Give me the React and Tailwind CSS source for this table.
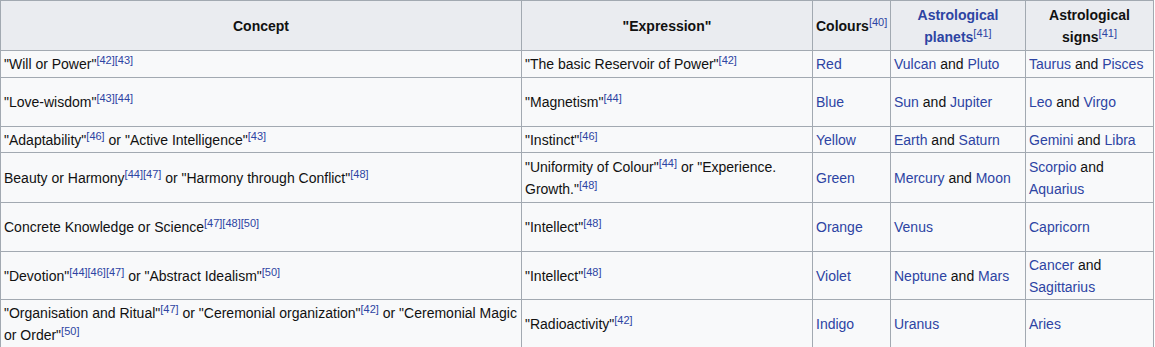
import React from "react";

const L = ({ children }) => <span className="text-[#2d44a3]">{children}</span>;
const S = ({ children }) => (
  <span className="align-[5px] text-[11px] font-normal leading-none text-[#2d44a3]">{children}</span>
);

const td = "border border-[#a2a9b1] px-[3px] py-0 align-middle";
const th = "border border-[#a2a9b1] px-[3px] py-0 align-middle text-center font-bold bg-[#eaecf0]";

const rows = [
  {
    h: "h-[27px]",
    c: [
      <>"Will or Power"<S>[42][43]</S></>,
      <>"The basic Reservoir of Power"<S>[42]</S></>,
      <L>Red</L>,
      <><L>Vulcan</L> and <L>Pluto</L></>,
      <><L>Taurus</L> and <L>Pisces</L></>,
    ],
  },
  {
    h: "h-[49px]",
    c: [
      <>"Love-wisdom"<S>[43][44]</S></>,
      <>"Magnetism"<S>[44]</S></>,
      <L>Blue</L>,
      <><L>Sun</L> and <L>Jupiter</L></>,
      <><L>Leo</L> and <L>Virgo</L></>,
    ],
  },
  {
    h: "h-[26px]",
    c: [
      <>"Adaptability"<S>[46]</S> or "Active Intelligence"<S>[43]</S></>,
      <>"Instinct"<S>[46]</S></>,
      <L>Yellow</L>,
      <><L>Earth</L> and <L>Saturn</L></>,
      <><L>Gemini</L> and <L>Libra</L></>,
    ],
  },
  {
    h: "h-[50px]",
    c: [
      <>Beauty or Harmony<S>[44][47]</S> or "Harmony through Conflict"<S>[48]</S></>,
      <>"Uniformity of Colour"<S>[44]</S> or "Experience. Growth."<S>[48]</S></>,
      <L>Green</L>,
      <><L>Mercury</L> and <L>Moon</L></>,
      <><L>Scorpio</L> and <L>Aquarius</L></>,
    ],
  },
  {
    h: "h-[49px]",
    c: [
      <>Concrete Knowledge or Science<S>[47][48][50]</S></>,
      <>"Intellect"<S>[48]</S></>,
      <L>Orange</L>,
      <L>Venus</L>,
      <L>Capricorn</L>,
    ],
  },
  {
    h: "h-[48px]",
    c: [
      <>"Devotion"<S>[44][46][47]</S> or "Abstract Idealism"<S>[50]</S></>,
      <>"Intellect"<S>[48]</S></>,
      <L>Violet</L>,
      <><L>Neptune</L> and <L>Mars</L></>,
      <><L>Cancer</L> and <L>Sagittarius</L></>,
    ],
  },
  {
    h: "h-[49px]",
    c: [
      <>"Organisation and Ritual"<S>[47]</S> or "Ceremonial organization"<S>[42]</S> or "Ceremonial Magic or Order"<S>[50]</S></>,
      <>"Radioactivity"<S>[42]</S></>,
      <L>Indigo</L>,
      <L>Uranus</L>,
      <L>Aries</L>,
    ],
  },
];

export default function App() {
  return (
    <div className="w-[1155px] h-[347px] overflow-hidden bg-white">
      <table
        className="w-[1153px] table-fixed border-collapse bg-[#f8f9fa] text-[14px] leading-[22px] text-[#111] font-['Liberation_Sans',Arial,sans-serif]"
      >
        <colgroup>
          <col className="w-[521px]" />
          <col className="w-[291px]" />
          <col className="w-[78px]" />
          <col className="w-[135px]" />
          <col className="w-[128px]" />
        </colgroup>
        <thead>
          <tr className="h-[50px]">
            <th className={th}>Concept</th>
            <th className={th}>"Expression"</th>
            <th className={th + " text-left"}>
              Colours<S>[40]</S>
            </th>
            <th className={th}>
              <span className="text-[#2d44a3]">Astrological planets</span>
              <S>[41]</S>
            </th>
            <th className={th}>
              Astrological signs<S>[41]</S>
            </th>
          </tr>
        </thead>
        <tbody>
          {rows.map((r, i) => (
            <tr key={i} className={r.h}>
              {r.c.map((c, j) => (
                <td key={j} className={td}>
                  {c}
                </td>
              ))}
            </tr>
          ))}
        </tbody>
      </table>
    </div>
  );
}
